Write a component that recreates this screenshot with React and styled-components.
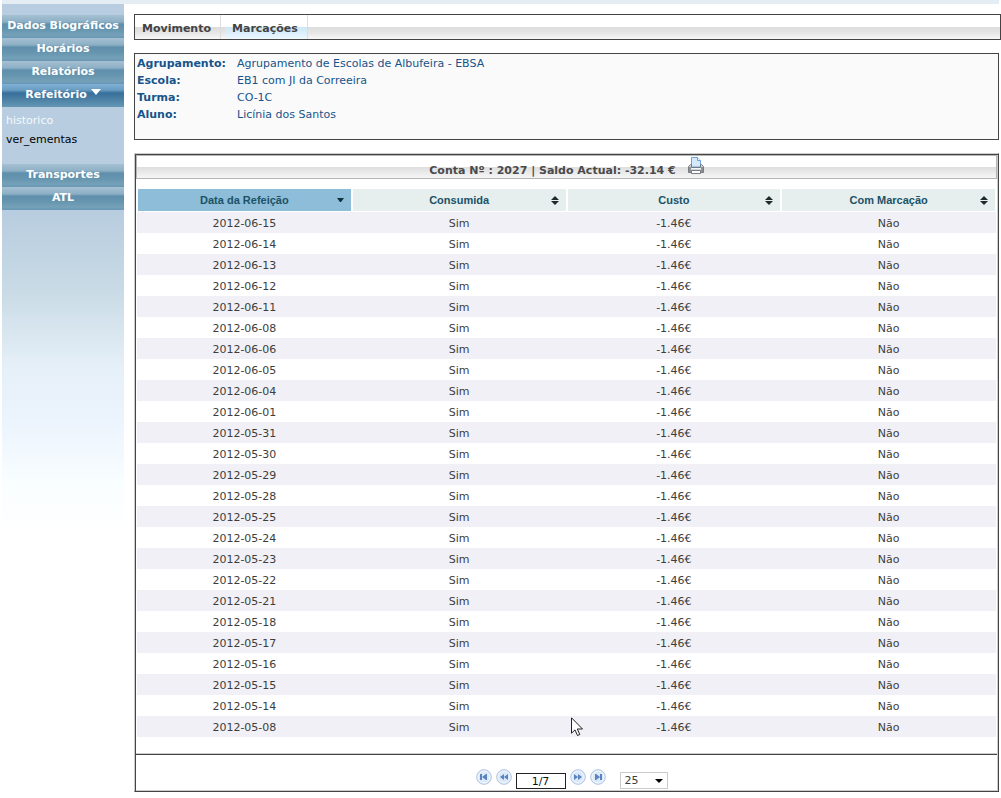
import React, { useState } from "react";
import styled, { createGlobalStyle } from "styled-components";

const menuTop = ["Dados Biográficos", "Horários", "Relatórios"];
const menuBottom = ["Transportes", "ATL"];

const student = [
  ["Agrupamento:", "Agrupamento de Escolas de Albufeira - EBSA"],
  ["Escola:", "EB1 com JI da Correeira"],
  ["Turma:", "CO-1C"],
  ["Aluno:", "Licínia dos Santos"],
];

const columns = ["Data da Refeição", "Consumida", "Custo", "Com Marcação"];

const dates = [
  "2012-06-15",
  "2012-06-14",
  "2012-06-13",
  "2012-06-12",
  "2012-06-11",
  "2012-06-08",
  "2012-06-06",
  "2012-06-05",
  "2012-06-04",
  "2012-06-01",
  "2012-05-31",
  "2012-05-30",
  "2012-05-29",
  "2012-05-28",
  "2012-05-25",
  "2012-05-24",
  "2012-05-23",
  "2012-05-22",
  "2012-05-21",
  "2012-05-18",
  "2012-05-17",
  "2012-05-16",
  "2012-05-15",
  "2012-05-14",
  "2012-05-08",
];

const pagerShapes = {
  first: "M4 5h2v6H4z M6 8l4-3v6z M10 5h1v6h-1z",
  prev: "M8 5v6L4 8z M12 5v6L8 8z",
  next: "M4 5v6l4-3z M8 5v6l4-3z",
  last: "M10 5h2v6h-2z M10 8L6 5v6z M5 5h1v6H5z",
};

function SortIcon({ active }) {
  return (
    <svg width="8" height="9" viewBox="0 0 8 9" aria-hidden="true">
      {active ? (
        <path d="M1 2h7L5 6H4z" fill="#10303a" />
      ) : (
        <path d="M4 0l4 4H0z M0 5h8L4 9z" fill="#1c2a2a" />
      )}
    </svg>
  );
}

function PrinterIcon() {
  return (
    <svg width="16" height="17" viewBox="0 0 16 17" aria-hidden="true">
      <path d="M3.5 10V.5h6l3 3V10z" fill="#d6e9fb" stroke="#6ea3d6" />
      <path d="M9.500.5v3h3" fill="#f5faff" stroke="#6ea3d6" />
      <path d="M2.500 7.500h1v3h9v-3h1l2 2v6H.5v-6z" fill="#d2d3d6" stroke="#777a80" />
      <path d="M1 10h2v5H1z M13 10h2v5h-2z" fill="#8d9096" />
      <path d="M3 11.500h10" stroke="#f4f4f4" />
      <path d="M3.500 13.500h9v3h-9z" fill="#fff" stroke="#777a80" />
    </svg>
  );
}

function PagerIcon({ shape }) {
  return (
    <svg width="16" height="16" viewBox="0 0 16 16" aria-hidden="true">
      <circle cx="8" cy="8" r="7.300" fill="#dce9f8" stroke="#adc3e0" />
      <circle cx="8" cy="8" r="6" fill="none" stroke="#f3f8fe" />
      <path d={pagerShapes[shape]} fill="#5a83c0" />
    </svg>
  );
}

function Pointer() {
  return (
    <PointerSvg width="13" height="20" viewBox="0 0 13 20" aria-hidden="true">
      <path
        d="M.5.800v15.400l3.500-3.300 2.500 5.600 2.300-1-2.500-5.500h5.200z"
        fill="#fff"
        stroke="#222"
      />
    </PointerSvg>
  );
}

function App() {
  const [page, setPage] = useState("1/7");
  const [size, setSize] = useState("25");

  return (
    <>
      <GlobalStyle />
      <TopStrip />
      <Layout>
        <Sidebar>
          {menuTop.map((item) => (
            <MenuButton key={item}>{item}</MenuButton>
          ))}
          <MenuButton $open>
            Refeitório
            <svg width="10" height="6" viewBox="0 0 10 6" aria-hidden="true">
              <path d="M0 0h10L5 6z" fill="#fff" />
            </svg>
          </MenuButton>
          <SubMenu>
            <SubLink href="#historico" $current>
              historico
            </SubLink>
            <SubLink href="#ver_ementas">ver_ementas</SubLink>
          </SubMenu>
          {menuBottom.map((item) => (
            <MenuButton key={item}>{item}</MenuButton>
          ))}
        </Sidebar>

        <Main>
          <Tabs>
            <Tab>Movimento</Tab>
            <Tab $active>Marcações</Tab>
          </Tabs>

          <Info>
            {student.map(([label, value]) => (
              <React.Fragment key={label}>
                <dt>{label}</dt>
                <dd>{value}</dd>
              </React.Fragment>
            ))}
          </Info>

          <Panel>
            <Account>
              Conta Nº : 2027 | Saldo Actual: -32.14 €
              <PrintButton aria-label="Imprimir">
                <PrinterIcon />
              </PrintButton>
            </Account>
            <TableArea>
              <Table>
                <thead>
                  <tr>
                    {columns.map((name, index) => (
                      <HeadCell key={name} $sorted={index === 0}>
                        <HeadButton>
                          <span>{name}</span>
                          <SortIcon active={index === 0} />
                        </HeadButton>
                      </HeadCell>
                    ))}
                  </tr>
                </thead>
                <tbody>
                  {dates.map((date) => (
                    <Row key={date}>
                      <td>{date}</td>
                      <td>Sim</td>
                      <td>-1.46€</td>
                      <td>Não</td>
                    </Row>
                  ))}
                </tbody>
              </Table>
              <Pointer />
            </TableArea>
            <Pager>
              <PagerButton aria-label="Primeira página">
                <PagerIcon shape="first" />
              </PagerButton>
              <PagerButton aria-label="Página anterior">
                <PagerIcon shape="prev" />
              </PagerButton>
              <PageInput
                aria-label="Página"
                value={page}
                onChange={(e) => setPage(e.target.value)}
              />
              <PagerButton aria-label="Página seguinte">
                <PagerIcon shape="next" />
              </PagerButton>
              <PagerButton aria-label="Última página">
                <PagerIcon shape="last" />
              </PagerButton>
              <SizeBox>
                <select
                  aria-label="Linhas por página"
                  value={size}
                  onChange={(e) => setSize(e.target.value)}
                >
                  <option>25</option>
                  <option>50</option>
                  <option>100</option>
                </select>
                <svg width="8" height="4" viewBox="0 0 8 4" aria-hidden="true">
                  <path d="M0 0h8L4 4z" fill="#000" />
                </svg>
              </SizeBox>
            </Pager>
          </Panel>
        </Main>
      </Layout>
    </>
  );
}

const GlobalStyle = createGlobalStyle`
  * {
    box-sizing: border-box;
  }
  body {
    margin: 0;
    background-color: #fff;
    color: #3d3d3d;
    font-family: Verdana, "DejaVu Sans", sans-serif;
    font-size: 11px;
  }
  button {
    border: 0;
    padding: 0;
    background: none;
    color: inherit;
    font: inherit;
    cursor: pointer;
  }
  svg {
    display: block;
  }
`;

const TopStrip = styled.div`
  height: 4px;
  margin: 0 2px;
  background-color: #e4ecf4;
`;

const Layout = styled.div`
  display: flex;
  align-items: stretch;
  gap: 10px;
  padding-left: 2px;
`;

const Sidebar = styled.nav`
  flex: 0 0 122px;
  display: flex;
  flex-direction: column;
  padding-top: 11px;
  background: linear-gradient(
      #b8cddf 0,
      #b8cddf 210px,
      #c8dae5 285px,
      #e6f0f8 365px,
      #ecf4fd 420px,
      #f9feff 480px,
      #fff 530px
    )
    no-repeat;
`;

const MenuButton = styled.button`
  display: flex;
  justify-content: center;
  gap: 4px;
  height: 23px;
  padding-bottom: 3px;
  align-items: center;
  color: #fff;
  font-weight: bold;
  white-space: nowrap;
  background: ${({ $open }) =>
    $open
      ? "linear-gradient(#7fb0d6 0, #6a9dc2 6px, #376f9c 9px, #477da2 14px, #6597b4 23px)"
      : "linear-gradient(#a6c0d2 0, #8cafc5 7px, #5f8fac 9px, #6494ae 14px, #75a1b8 20px, #6896b4 23px)"};
  svg {
    margin-bottom: 5px;
  }
`;

const SubMenu = styled.div`
  display: flex;
  flex-direction: column;
  height: 57px;
  padding: 4px;
`;

const SubLink = styled.a`
  line-height: 19px;
  color: ${({ $current }) => ($current ? "#f4f9fd" : "#000")};
  text-decoration: none;
`;

const Main = styled.main`
  flex: 1;
  min-width: 0;
  padding-top: 10px;
`;

const Tabs = styled.div`
  display: flex;
  height: 26px;
  border: 1px solid #444;
  background: linear-gradient(#fff 12px, #dcdcdc 12px, #e6e6e6 18px, #f8f8f8 24px);
`;

const Tab = styled.button`
  padding: 2px 9px 0 7px;
  margin-right: ${({ $active }) => ($active ? "0" : "4px")};
  border-right: 1px solid #ddd;
  color: #444;
  font-weight: bold;
  ${({ $active }) =>
    $active &&
    "background: linear-gradient(#fff 12px, #cde6f8 12px, #dceefb 18px, #eef8ff 24px);"}
`;

const Info = styled.dl`
  display: grid;
  grid-template-columns: 100px 1fr;
  align-content: start;
  margin: 13px 2px 13px 0;
  padding: 1px 2px 16px;
  border: 1px solid #444;
  background-color: #fafafa;
  color: #17548a;
  line-height: 17px;
  dt {
    font-weight: bold;
  }
  dd {
    margin: 0;
  }
`;

const Panel = styled.section`
  margin-right: 2px;
  padding: 1px;
  border: 1px solid;
  border-color: #ccc #444 #444 #ccc;
  box-shadow: inset 1px 1px #444, inset -1px -1px #ccc;
`;

const Account = styled.div`
  display: flex;
  justify-content: center;
  gap: 12px;
  height: 24px;
  padding-top: 1px;
  border: 1px solid #b5b5b5;
  background: linear-gradient(#fff 11px, #dedede 11px, #e9e9e9 16px, #f6f6f6 22px);
  color: #4a4a4a;
  font-weight: bold;
  line-height: 28px;
`;

const PrintButton = styled.button`
  height: 17px;
`;

const TableArea = styled.div`
  position: relative;
  padding: 8px 1px 16px;
`;

const Table = styled.table`
  width: 100%;
  table-layout: fixed;
  border-collapse: separate;
  border-spacing: 0;
`;

const HeadCell = styled.th`
  height: 25px;
  padding: 0;
  border: 1px solid #fff;
  border-width: 2px 1px 1px;
  background-color: ${({ $sorted }) => ($sorted ? "#8dbdd8" : "#e6eeee")};
`;

const HeadButton = styled.button`
  display: flex;
  align-items: center;
  width: 100%;
  height: 22px;
  padding-right: 7px;
  color: #1b5266;
  font-family: Arial, "Liberation Sans", sans-serif;
  font-weight: bold;
  span {
    flex: 1;
    padding-left: 15px;
  }
`;

const Row = styled.tr`
  &:nth-child(odd) {
    background-color: #f0f0f6;
  }
  td {
    height: 21px;
    padding: 2px 0 0;
    line-height: 19px;
    text-align: center;
  }
`;

const Pager = styled.div`
  display: flex;
  align-items: flex-start;
  justify-content: center;
  gap: 4px;
  height: 37px;
  padding: 15px 0 0 10px;
  border-top: 1px solid #ccc;
  box-shadow: inset 0 1px #444;
`;

const PagerButton = styled.button`
  height: 16px;
`;

const PageInput = styled.input`
  width: 50px;
  height: 16px;
  margin-top: 4px;
  padding: 0;
  border: 1px solid #222;
  background-color: #fff;
  color: #111;
  font: inherit;
  text-align: center;
`;

const SizeBox = styled.div`
  display: flex;
  align-items: center;
  width: 48px;
  height: 17px;
  margin: 3px 0 0 10px;
  padding-right: 4px;
  border: 1px solid #ccc;
  select {
    flex: 1;
    min-width: 0;
    height: 15px;
    padding: 0 4px;
    border: 0;
    appearance: none;
    background: none;
    color: #3d3d3d;
    font: inherit;
  }
`;

const PointerSvg = styled.svg`
  position: absolute;
  left: calc(50% + 4px);
  bottom: 16px;
`;

export default App;
